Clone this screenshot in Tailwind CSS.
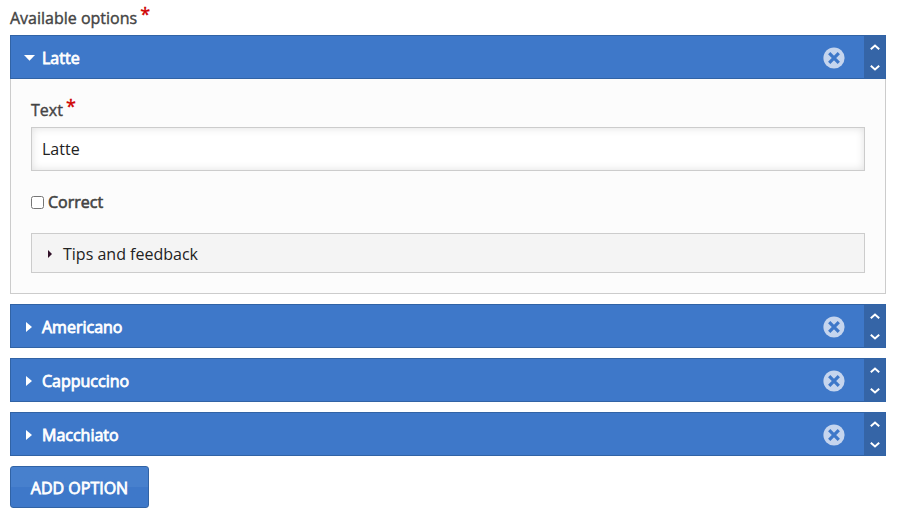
<!DOCTYPE html>
<html lang="en">
<head>
    <meta charset="UTF-8">
    <title>Available options</title>
    <script src="https://cdn.jsdelivr.net/npm/@tailwindcss/browser@4"></script>
</head>
<body class="bg-white font-['Open_Sans',sans-serif] text-base text-[#444]">
    <!-- shared icons -->
    <svg class="hidden">
        <symbol id="remove" viewBox="0 0 22 22">
            <circle cx="11" cy="11" r="10.6" fill="#c5d5ee"/>
            <path d="M6.2 6.2l9.6 9.6M15.8 6.2l-9.6 9.6" stroke="#3e78c9" stroke-width="3.2"/>
        </symbol>
        <symbol id="up" viewBox="0 0 10 6">
            <path d="M.8 5.2L5 1.5l4.2 3.7" fill="none" stroke="#fff" stroke-width="2"/>
        </symbol>
        <symbol id="down" viewBox="0 0 10 6">
            <path d="M.8 .8L5 4.5 9.2 .8" fill="none" stroke="#fff" stroke-width="2"/>
        </symbol>
    </svg>

    <div class="w-[896px] pl-2.5 pr-2.5 pt-[7px]">
        <div class="flex h-7 leading-[22px] [-webkit-text-stroke:0.4px_#444]">
            Available options<span class="ml-[3px] -mt-1 text-lg leading-[22px] text-[#d00000] [-webkit-text-stroke:0.4px_#d00000]">*</span>
        </div>

        <div class="space-y-2.5">
            <!-- Latte, expanded -->
            <div>
                <div class="flex h-11 bg-[#3e78c9] border border-[#3163a5] text-white">
                    <div class="flex flex-1 items-center pl-[13px] pr-[19px]">
                        <svg class="mt-[2px] w-[11px] h-[6px]" viewBox="0 0 11 6"><path d="M0 0h11L5.5 5.7z" fill="#fff"/></svg>
                        <span class="ml-[7px] flex-1 pt-[2px] [-webkit-text-stroke:0.8px_#fff]">Latte</span>
                        <svg class="size-[22px] mt-[2px]"><use href="#remove"/></svg>
                    </div>
                    <div class="flex w-[21px] flex-col items-center justify-between bg-[#3565a7] pt-2 pb-[7px]">
                        <svg class="w-2.5 h-1.5"><use href="#up"/></svg>
                        <svg class="w-2.5 h-1.5"><use href="#down"/></svg>
                    </div>
                </div>
                <div class="h-[215px] border border-t-0 border-[#ccc] bg-[#fcfcfc] px-5 pt-5">
                    <div class="flex h-7 leading-[22px] [-webkit-text-stroke:0.4px_#444]">
                        Text<span class="ml-[3px] -mt-1 text-lg leading-[22px] text-[#d00000] [-webkit-text-stroke:0.4px_#d00000]">*</span>
                    </div>
                    <input type="text" value="Latte" class="block h-11 w-full border border-[#ccc] bg-white px-2.5 text-[#222] shadow-[inset_0_0_8px_rgba(0,0,0,0.13)]">
                    <label class="mt-5 flex h-[22px] items-center [-webkit-text-stroke:0.6px_#444]">
                        <input type="checkbox" class="mr-1 size-[13px]">Correct
                    </label>
                    <div class="mt-5 flex h-10 items-center border border-[#ccc] bg-[#f4f4f4] pl-4 text-[#222]">
                        <svg class="mt-px w-[4px] h-[8px]" viewBox="0 0 4 8"><path d="M0 0l4 4-4 4z" fill="#301028"/></svg>
                        <span class="ml-[11px] pt-[2px]">Tips and feedback</span>
                    </div>
                </div>
            </div>

            <div class="flex h-11 bg-[#3e78c9] border border-[#3163a5] text-white">
                <div class="flex flex-1 items-center pl-[15px] pr-[19px]">
                    <svg class="mt-[2px] w-[6px] h-[10px]" viewBox="0 0 6 10"><path d="M0 0l6 5-6 5z" fill="#fff"/></svg>
                    <span class="ml-[10px] flex-1 pt-[2px] [-webkit-text-stroke:0.8px_#fff]">Americano</span>
                    <svg class="size-[22px] mt-[2px]"><use href="#remove"/></svg>
                </div>
                <div class="flex w-[21px] flex-col items-center justify-between bg-[#3565a7] pt-2 pb-[7px]">
                    <svg class="w-2.5 h-1.5"><use href="#up"/></svg>
                    <svg class="w-2.5 h-1.5"><use href="#down"/></svg>
                </div>
            </div>

            <div class="flex h-11 bg-[#3e78c9] border border-[#3163a5] text-white">
                <div class="flex flex-1 items-center pl-[15px] pr-[19px]">
                    <svg class="mt-[2px] w-[6px] h-[10px]" viewBox="0 0 6 10"><path d="M0 0l6 5-6 5z" fill="#fff"/></svg>
                    <span class="ml-[10px] flex-1 pt-[2px] [-webkit-text-stroke:0.8px_#fff]">Cappuccino</span>
                    <svg class="size-[22px] mt-[2px]"><use href="#remove"/></svg>
                </div>
                <div class="flex w-[21px] flex-col items-center justify-between bg-[#3565a7] pt-2 pb-[7px]">
                    <svg class="w-2.5 h-1.5"><use href="#up"/></svg>
                    <svg class="w-2.5 h-1.5"><use href="#down"/></svg>
                </div>
            </div>

            <div class="flex h-11 bg-[#3e78c9] border border-[#3163a5] text-white">
                <div class="flex flex-1 items-center pl-[15px] pr-[19px]">
                    <svg class="mt-[2px] w-[6px] h-[10px]" viewBox="0 0 6 10"><path d="M0 0l6 5-6 5z" fill="#fff"/></svg>
                    <span class="ml-[10px] flex-1 pt-[2px] [-webkit-text-stroke:0.8px_#fff]">Macchiato</span>
                    <svg class="size-[22px] mt-[2px]"><use href="#remove"/></svg>
                </div>
                <div class="flex w-[21px] flex-col items-center justify-between bg-[#3565a7] pt-2 pb-[7px]">
                    <svg class="w-2.5 h-1.5"><use href="#up"/></svg>
                    <svg class="w-2.5 h-1.5"><use href="#down"/></svg>
                </div>
            </div>

            <button type="button" class="block h-[42px] w-[139px] rounded-[3px] border border-[#3163a5] bg-linear-to-b from-[#4780cd] from-50% to-[#3e78c9] to-50% pt-[2px] text-white [-webkit-text-stroke:0.8px_#fff]">ADD OPTION</button>
        </div>
    </div>
</body>
</html>
